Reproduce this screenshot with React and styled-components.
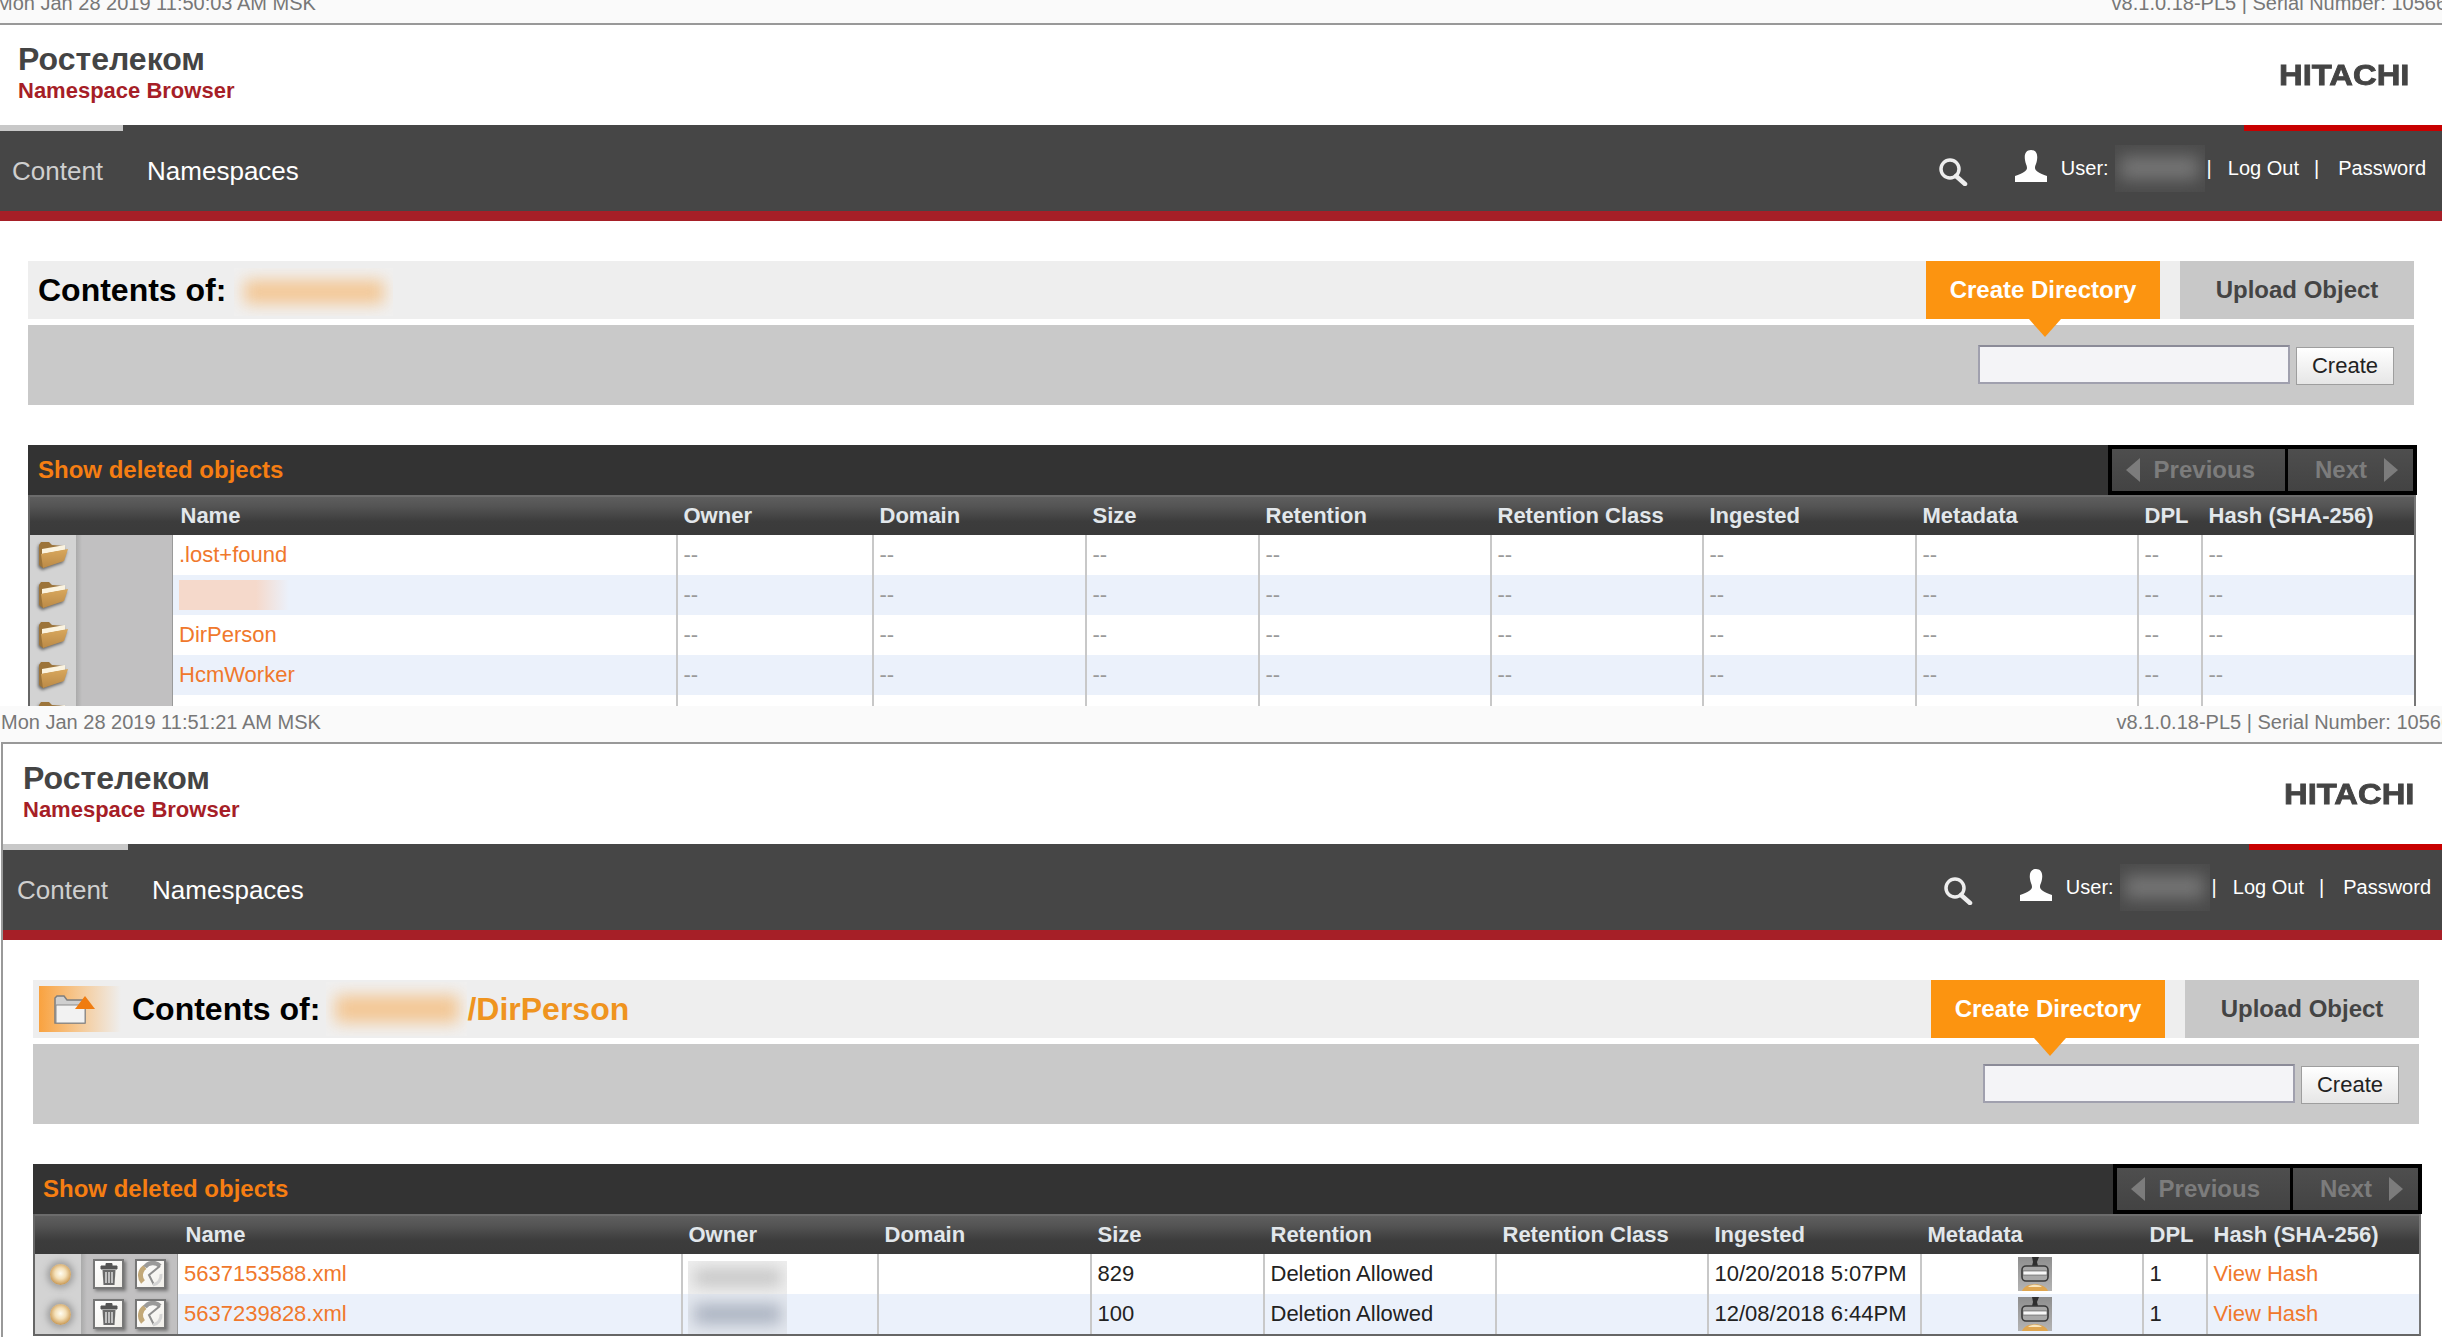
import React from 'react'
import styled, {createGlobalStyle} from 'styled-components'

const GlobalStyle = createGlobalStyle`
  html, body {
    margin: 0;
    padding: 0;
    background: #fff;
    overflow: hidden;
    font-family: "Liberation Sans", Arial, sans-serif;
  }
  * { box-sizing: border-box; }
`
const Shell = styled.section`
  width: 2450px;
  height: ${p => p.$height}px;
  margin-left: ${p => p.$left}px;
  margin-top: ${p => p.$top || 0}px;
  overflow: hidden;
  position: relative;
`
const Strip = styled.div`
  height: 36px;
  padding-left: 1px;
  background: #fafafa;
  display: flex;
  justify-content: space-between;
  font-size: 20px;
  line-height: 33px;
  color: #777;
  white-space: nowrap;
`
const Version = styled.span`
  margin-right: -2px;
`
const Body = styled.div`
  width: 2449px;
  margin-left: 1px;
  height: 100%;
  border-top: 2px solid #999;
  border-left: 2px solid #999;
  background: #fff;
`
const Header = styled.header`
  height: 100px;
  padding: 0 36px 0 20px;
  display: flex;
  justify-content: space-between;
  align-items: center;
`
const Brand = styled.div`
  display: flex;
  flex-direction: column;
  margin-top: -4px;
`
const Company = styled.div`
  font-size: 32px;
  line-height: 34px;
  margin-bottom: 1px;
  font-weight: 700;
  color: #444;
`
const Product = styled.div`
  font-size: 22px;
  line-height: 27px;
  font-weight: 700;
  color: #a61e27;
`
const Logo = styled.div`
  font-size: 29px;
  font-weight: 700;
  color: #444;
  -webkit-text-stroke: 0.8px #444;
  transform: scaleX(1.13);
  transform-origin: right center;
  filter: blur(0.7px);
  margin-top: 0;
`
const Nav = styled.nav`
  position: relative;
  height: 96px;
  background: #464646;
  border-bottom: 10px solid #a61f27;
  display: flex;
  align-items: center;
  padding: 0 19px 0 14px;
  color: #fff;
`
const NavMark = styled.span`
  position: absolute;
  top: 0;
  height: 6px;
  left: ${p => p.$left}px;
  width: ${p => p.$width}px;
  background: ${p => p.$color};
`
const NavLink = styled.a`
  font-size: 26px;
  margin-right: 44px;
  margin-top: 6px;
  color: ${p => (p.$dim ? '#cfcfcf' : '#fff')};
`
const UserArea = styled.div`
  margin-left: auto;
  display: flex;
  align-items: center;
  font-size: 20px;
`
const SearchIcon = styled.svg`
  width: 30px;
  height: 28px;
  margin-right: 47px;
  margin-top: 8px;
  filter: blur(0.4px);
`
const UserIcon = styled.svg`
  width: 32px;
  height: 32px;
  margin-right: 14px;
  margin-top: -4px;
`
const Sep = styled.span`
  margin: 0 ${p => p.$right}px 0 ${p => p.$left}px;
`
const Smudge = styled.span`
  display: block;
  flex: none;
  position: relative;
  overflow: hidden;
  width: ${p => p.$w}px;
  height: ${p => p.$h}px;
  margin-left: ${p => p.$ml || 0}px;
  margin-top: ${p => p.$mt || 0}px;
  background: ${p => p.$bg};
  &::after {
    content: '';
    position: absolute;
    inset: 24% 6%;
    background: ${p => p.$ink};
    filter: blur(8px);
  }
`
const Main = styled.main`
  padding: 40px 0 0 30px;
`
const TitleBar = styled.div`
  width: 2386px;
  height: 58px;
  background: #eee;
  display: flex;
  align-items: center;
  padding-left: ${p => p.$pad}px;
`
const UpIcon = styled.span`
  width: 82px;
  height: 46px;
  margin-right: 11px;
  padding-left: 15px;
  display: flex;
  align-items: center;
  background: linear-gradient(90deg, #f9a23f, #f6c68e 45%, #eee);
`
const Title = styled.h1`
  margin: 0;
  font-size: 32px;
  font-weight: 700;
  color: #000;
  white-space: nowrap;
`
const Path = styled.span`
  font-size: 32px;
  font-weight: 700;
  color: #ef941f;
  white-space: nowrap;
`
const Tabs = styled.div`
  margin-left: auto;
  display: flex;
  gap: 20px;
  height: 100%;
`
const Tab = styled.div`
  position: relative;
  z-index: 1;
  width: ${p => p.$w}px;
  display: flex;
  align-items: center;
  justify-content: center;
  font-size: 24px;
  font-weight: 700;
  color: ${p => (p.$active ? '#fff' : '#444')};
  background: ${p => (p.$active ? '#fc9410' : '#c8c8c8')};
  ${p => p.$active && `
    &::after {
      content: '';
      position: absolute;
      top: 100%;
      left: 103px;
      border-left: 16px solid transparent;
      border-right: 16px solid transparent;
      border-top: 18px solid #fc9410;
    }
  `}
`
const CreatePanel = styled.div`
  width: 2386px;
  height: 80px;
  margin-top: 6px;
  background: #c9c9c9;
  display: flex;
  justify-content: flex-end;
  align-items: flex-start;
  gap: 6px;
  padding: 20px 20px 0 0;
`
const NameInput = styled.input`
  width: 312px;
  height: 39px;
  background: #f4f4f7;
  border: 2px solid #a0a0ae;
  border-top-color: #8b8b98;
  outline: none;
`
const CreateButton = styled.button`
  width: 98px;
  height: 38px;
  margin-top: 2px;
  padding: 0;
  background: linear-gradient(#fff, #e6e6e6);
  border: 1px solid #9e9e9e;
  font-family: inherit;
  font-size: 22px;
  color: #222;
`
const Toolbar = styled.div`
  width: 2389px;
  height: 50px;
  margin-top: 40px;
  background: #333;
  display: flex;
  justify-content: space-between;
  align-items: center;
  padding-left: 10px;
`
const ToggleDeleted = styled.a`
  font-size: 24px;
  font-weight: 700;
  color: #f67e12;
`
const Pager = styled.div`
  display: flex;
  align-self: stretch;
  gap: 3px;
  padding: 4px;
  background: #000;
`
const PageButton = styled.div`
  width: ${p => p.$w}px;
  display: flex;
  align-items: center;
  justify-content: space-between;
  padding: ${p => p.$pad};
  background: linear-gradient(#4e4e4e, #434343);
  font-size: 24px;
  font-weight: 700;
  color: #7c7c7c;
`
const Table = styled.table`
  width: 2386px;
  table-layout: fixed;
  border-collapse: separate;
  border-spacing: 0;
  border-left: 2px solid #666;
  border-right: 2px solid #777;
  border-bottom: 2px solid #666;
`
const HeadRow = styled.tr`
  height: 40px;
`
const Th = styled.th`
  padding: 0 0 0 7.5px;
  text-align: left;
  font-size: 22px;
  font-weight: 700;
  color: #e2e7eb;
  white-space: nowrap;
  border-top: 2px solid #6c6c6c;
  background: linear-gradient(#5e5e5e, #545454 25%, #3c3c3c 65%, #3a3a3a);
`
const Row = styled.tr`
  height: 40px;
  background: ${p => (p.$alt ? '#ebf1fb' : '#fff')};
`
const Td = styled.td`
  padding: 0 0 0 5.5px;
  border-left: 2px solid #c8c8c8;
  font-size: 22px;
  color: ${p => (p.$muted ? '#9a9a9a' : '#222')};
  white-space: nowrap;
  overflow: hidden;
  text-align: ${p => (p.$center ? 'center' : 'left')};
`
const NameCell = styled(Td)`
  border-left: none;
  padding-left: 6px;
`
const OwnerCell = styled(Td)`
  padding: 0 0 0 5px;
  vertical-align: top;
`
const StatusCell = styled.td`
  padding: 0;
  background: #d3d3d3;
  text-align: center;
`
const ActionsCell = styled.td`
  padding: 0;
  background: linear-gradient(90deg, #aaa, #c1c0c1 6px);
  border-right: 1px solid #9a9a9a;
`
const ActionsRow = styled.div`
  display: flex;
  gap: 11px;
  padding-left: 12px;
`
const Link = styled.a`
  color: #f0782c;
`
const FolderShape = styled.svg`
  display: block;
  width: 33px;
  height: 28px;
  margin: 0 0 0 6px;
  filter: drop-shadow(-1px 2px 1.5px rgba(50, 50, 50, 0.65));
`
const Bullet = styled.span`
  display: block;
  width: 21px;
  height: 21px;
  margin: 0 0 0 15px;
  border-radius: 50%;
  background: radial-gradient(circle at 50% 45%, #fffdf2 0, #f4e0b8 35%, #d3a868 65%, #85602f 100%);
  box-shadow: 0 0 6px 3px rgba(110, 110, 110, 0.5);
`
const ActionBox = styled.span`
  display: flex;
  align-items: center;
  justify-content: center;
  width: 31px;
  height: 30px;
  background: linear-gradient(135deg, #fff, #f1efea);
  border: 2px solid #777;
  box-shadow: 2px 2px 3px rgba(80, 80, 80, 0.65);
`
const StampShape = styled.svg`
  display: block;
  width: 34px;
  height: 34px;
  margin: 0 auto;
`

const Folder = () => (
  <FolderShape viewBox='0 0 33 28'>
    <defs>
      <linearGradient id='folderFront' x1='0' y1='0' x2='0' y2='1'>
        <stop offset='0' stopColor='#d8a75c' />
        <stop offset='1' stopColor='#bb8a47' />
      </linearGradient>
    </defs>
    <path d='M3 4 L5 1 L13 1 L16 4 L28 5 L28 18 L7 27 L3 24 Z' fill='#9c743a' />
    <path d='M6 8 L29 4 L29 9 L6 13 Z' fill='#fbf3df' />
    <path d='M5 13 L32 8 L28 20 L7 27 Z' fill='url(#folderFront)' />
  </FolderShape>
)

const TrashIcon = () => (
  <svg width='20' height='24' viewBox='0 0 20 24'>
    <path d='M2 4 H18 V7 H2 Z M7 4 V1.5 H13 V4' fill='#555' stroke='#555' strokeWidth='1' />
    <path d='M3.5 8 H16.5 L15.5 23 H4.5 Z' fill='#6a6a6a' />
    <path d='M7 10 V21 M10 10 V21 M13 10 V21' stroke='#eee' strokeWidth='1.3' />
  </svg>
)

const HoldIcon = () => (
  <svg width='27' height='26' viewBox='0 0 27 26'>
    <path d='M6 21 A10 10 0 0 1 8 6' fill='none' stroke='#c2a878' strokeWidth='5' />
    <path d='M8 6 A10 10 0 0 1 23 5' fill='none' stroke='#9a9a9a' strokeWidth='4.5' />
    <path d='M23 5 L12 14 L17 24' fill='none' stroke='#8f8f8f' strokeWidth='2' />
    <path d='M16 24 A10 10 0 0 0 24 13' fill='none' stroke='#d4d4d4' strokeWidth='3' />
  </svg>
)

const Stamp = () => (
  <StampShape viewBox='0 0 34 34'>
    <defs>
      <linearGradient id='stampBack' x1='0' y1='0' x2='0' y2='1'>
        <stop offset='0' stopColor='#8e8e8e' />
        <stop offset='1' stopColor='#b4b4b4' />
      </linearGradient>
    </defs>
    <rect width='34' height='34' fill='url(#stampBack)' />
    <path d='M14 0 H21 L19 5 L20 9 H14 L15 5 Z' fill='#2e2e2e' />
    <rect x='4' y='9' width='26' height='15' rx='4' fill='#a8a8a8' stroke='#3a3a3a' strokeWidth='1.6' />
    <rect x='5' y='14' width='24' height='4' fill='#f8f8f8' stroke='#555' strokeWidth='0.6' />
    <path d='M4 34 C7 25 27 25 30 34 Z' fill='#dfa650' />
    <path d='M10 30 C13 27 21 27 24 30 Z' fill='#f8e6c0' />
  </StampShape>
)

const Arrow = ({right}) => (
  <svg width='14' height='24' viewBox='0 0 14 24'>
    <path d={right ? 'M0 0 L14 12 L0 24 Z' : 'M14 0 L0 12 L14 24 Z'} fill='#7c7c7c' />
  </svg>
)

const columns = [
  {width: 46},
  {width: 97},
  {name: 'Name', width: 503},
  {name: 'Owner', width: 196},
  {name: 'Domain', width: 213},
  {name: 'Size', width: 173},
  {name: 'Retention', width: 232},
  {name: 'Retention Class', width: 212},
  {name: 'Ingested', width: 213},
  {name: 'Metadata', width: 222},
  {name: 'DPL', width: 64},
  {name: 'Hash (SHA-256)', width: 213}
]

const folders = ['.lost+found', null, 'DirPerson', 'HcmWorker', '']
const dirRest = [0, 1, 2, 3, 4, 5, 6, 7, 8]

const files = [
  {name: '5637153588.xml', size: '829', ingested: '10/20/2018 5:07PM', bg: '#efefef', ink: '#c4c4c4', h: 33, top: 7},
  {name: '5637239828.xml', size: '100', ingested: '12/08/2018 6:44PM', bg: '#e4e8ef', ink: '#aab2c0', h: 40, top: 0}
]

const Columns = () => (
  <colgroup>
    {columns.map((c, i) => <col key={i} style={{width: c.width}} />)}
  </colgroup>
)

const TableHead = () => (
  <thead>
    <HeadRow>
      {columns.map((c, i) => <Th key={i}>{c.name}</Th>)}
    </HeadRow>
  </thead>
)

const FolderTable = () => (
  <Table>
    <Columns />
    <TableHead />
    <tbody>
      {folders.map((name, i) => (
        <Row key={i} $alt={i % 2 === 1}>
          <StatusCell><Folder /></StatusCell>
          <ActionsCell />
          <NameCell>
            {name === null
              ? <Smudge $w={110} $h={30} $bg='linear-gradient(90deg, #f5d9cb 70%, #ebf1fb)' $ink='transparent' />
              : <Link>{name}</Link>}
          </NameCell>
          {dirRest.map(j => <Td key={j} $muted>{name === '' ? '' : '--'}</Td>)}
        </Row>
      ))}
    </tbody>
  </Table>
)

const FileTable = () => (
  <Table>
    <Columns />
    <TableHead />
    <tbody>
      {files.map((f, i) => (
        <Row key={i} $alt={i % 2 === 1}>
          <StatusCell><Bullet /></StatusCell>
          <ActionsCell>
            <ActionsRow>
              <ActionBox><TrashIcon /></ActionBox>
              <ActionBox><HoldIcon /></ActionBox>
            </ActionsRow>
          </ActionsCell>
          <NameCell><Link>{f.name}</Link></NameCell>
          <OwnerCell>
            <Smudge $w={99} $h={f.h} $mt={f.top} $bg={f.bg} $ink={f.ink} />
          </OwnerCell>
          <Td />
          <Td>{f.size}</Td>
          <Td>Deletion Allowed</Td>
          <Td />
          <Td>{f.ingested}</Td>
          <Td $center><Stamp /></Td>
          <Td>1</Td>
          <Td><Link>View Hash</Link></Td>
        </Row>
      ))}
    </tbody>
  </Table>
)

const Screen = ({date, height, left, top, upIcon, ownerWidth, path, children}) => (
  <Shell $height={height} $left={left} $top={top}>
    <Strip>
      <span>{date}</span>
      <Version>v8.1.0.18-PL5 | Serial Number: 10566</Version>
    </Strip>
    <Body>
      <Header>
        <Brand>
          <Company>Ростелеком</Company>
          <Product>Namespace Browser</Product>
        </Brand>
        <Logo>HITACHI</Logo>
      </Header>
      <Nav>
        <NavMark $left={0} $width={125} $color='#c8c8c8' />
        <NavMark $left={2246} $width={203} $color='#c80000' />
        <NavLink $dim>Content</NavLink>
        <NavLink>Namespaces</NavLink>
        <UserArea>
          <SearchIcon viewBox='0 0 30 28'>
            <circle cx='12' cy='11' r='9' fill='none' stroke='#eee' strokeWidth='3.5' />
            <path d='M18 18 L27 26' stroke='#eee' strokeWidth='4.5' strokeLinecap='round' />
          </SearchIcon>
          <UserIcon viewBox='0 0 32 32'>
            <path d='M16 0 C21 0 23 4 22 10 C21.5 14 20 15 20 18 C20 21 24 23 32 26 V32 H0 V26 C8 23 12 21 12 18 C12 15 10.5 14 10 10 C9 4 11 0 16 0 Z' fill='#fff' />
          </UserIcon>
          <span>User:</span>
          <Smudge $w={90} $h={47} $ml={6} $bg='#4b4b4b' $ink='#747474' />
          <Sep $left={2} $right={16}>|</Sep>
          <span>Log Out</span>
          <Sep $left={15} $right={19}>|</Sep>
          <span>Password</span>
        </UserArea>
      </Nav>
      <Main>
        <TitleBar $pad={upIcon ? 6 : 10}>
          {upIcon && (
            <UpIcon>
              <svg width='41' height='29' viewBox='0 0 41 29'>
                <path d='M1 3 L3 1 H10 L13 5 H31 V28 H1 Z' fill='#cfcfcf' stroke='#7e7e7e' strokeWidth='1.5' />
                <path d='M2 10 H31 V28 H2 Z' fill='#f2f2f2' stroke='#8a8a8a' strokeWidth='1' />
                <path d='M21 14 L31 1 L41 14 Z' fill='#f07c10' />
              </svg>
            </UpIcon>
          )}
          <Title>Contents of:</Title>
          <Smudge $w={ownerWidth} $h={upIcon ? 54 : 48} $ml={upIcon ? 6 : 8} $mt={upIcon ? 0 : 4} $bg='#f0f0f0' $ink='#f3c795' />
          {path && <Path>{path}</Path>}
          <Tabs>
            <Tab $w={234} $active>Create Directory</Tab>
            <Tab $w={234}>Upload Object</Tab>
          </Tabs>
        </TitleBar>
        <CreatePanel>
          <NameInput />
          <CreateButton>Create</CreateButton>
        </CreatePanel>
        <Toolbar>
          <ToggleDeleted>Show deleted objects</ToggleDeleted>
          <Pager>
            <PageButton $w={173} $pad='0 30px 0 14px'><Arrow />Previous</PageButton>
            <PageButton $w={125} $pad='0 15px 0 27px'>Next<Arrow right /></PageButton>
          </Pager>
        </Toolbar>
        {children}
      </Main>
    </Body>
  </Shell>
)

const App = () => (
  <>
    <GlobalStyle />
    <Screen date='Mon Jan 28 2019 11:50:03 AM MSK' height={719} left={-5} top={-13} ownerWidth={159}>
      <FolderTable />
    </Screen>
    <Screen date='Mon Jan 28 2019 11:51:21 AM MSK' height={631} left={0} upIcon ownerWidth={141} path='/DirPerson'>
      <FileTable />
    </Screen>
  </>
)

export default App
